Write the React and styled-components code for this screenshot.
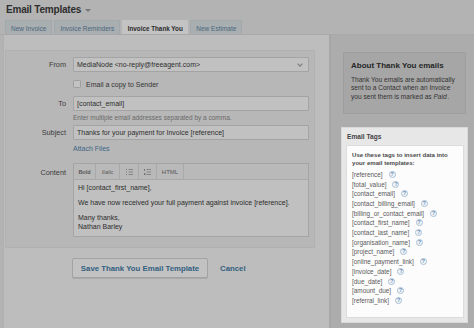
import React from "react";
import styled, { createGlobalStyle } from "styled-components";

const Global = createGlobalStyle`
  html, body {
    margin: 0;
    padding: 0;
    background: #b3b3b3;
    font-family: "Liberation Sans", Arial, sans-serif;
  }
`;

const Page = styled.div`
  width: 474px;
  height: 328px;
  overflow: hidden;
  background: #b3b3b3;
  display: flex;
  flex-direction: column;
`;

const Header = styled.div`
  padding: 4px 0 0 6px;
`;

const Title = styled.h1`
  margin: 0;
  font-size: 10px;
  line-height: 12px;
  font-weight: bold;
  letter-spacing: -0.2px;
  color: #2e2e2e;
  display: flex;
  align-items: center;
  gap: 4px;
`;

const Caret = styled.span`
  width: 0;
  height: 0;
  border-left: 3px solid transparent;
  border-right: 3px solid transparent;
  border-top: 3px solid #777;
  margin-top: 1px;
`;

const Tabs = styled.div`
  display: flex;
  gap: 2px;
  margin-top: 4px;
  margin-left: -1px;
`;

const Tab = styled.div`
  height: 15px;
  line-height: 15px;
  padding: 0 ${(p) => (p.$active ? "4.5px" : "5px")};
  font-size: ${(p) => (p.$active ? "6.3px" : "6.5px")};
  font-weight: ${(p) => (p.$active ? "bold" : "normal")};
  color: ${(p) => (p.$active ? "#2a2a2a" : "#4a677c")};
  background: ${(p) => (p.$active ? "#c3c3c3" : "#a9aeb1")};
  border: 1px solid ${(p) => (p.$active ? "#c3c3c3" : "#a3a8ab")};
  border-bottom: none;
  box-sizing: border-box;
  white-space: nowrap;
`;

const Main = styled.div`
  flex: 1;
  display: flex;
  border-top: 1px solid #a9a9a9;
  margin-top: -1px;
`;

const LeftPanel = styled.div`
  margin-left: 3px;
  width: 328px;
  background: #bdbdbd;
  border-left: 1px solid #b0b0b0;
  border-right: 2px solid #a6a6a6;
  padding: 15px 14px 0 1px;
  box-sizing: border-box;
`;

const FormBox = styled.div`
  background: #b7b7b7;
  border: 1px solid #b1b1b1;
  padding: 6px 5px 10px 0;
  display: flex;
  flex-direction: column;
`;

const Row = styled.div`
  display: flex;
  align-items: ${(p) => (p.$top ? "flex-start" : "center")};
  margin-top: ${(p) => p.$mt || 0}px;
`;

const Label = styled.div`
  width: 60px;
  padding-right: 7px;
  box-sizing: content-box;
  text-align: right;
  font-size: 7.3px;
  color: #3c3c3c;
  flex-shrink: 0;
  padding-top: ${(p) => (p.$top ? "5px" : "0")};
`;

const Input = styled.div`
  width: 240px;
  height: 15px;
  box-sizing: border-box;
  background: #c1c1c1;
  border: 1px solid #a4a4a4;
  border-radius: 1px;
  font-size: 7px;
  line-height: 13px;
  padding: 0 3px;
  color: #2f2f2f;
  display: flex;
  align-items: center;
  justify-content: space-between;
  white-space: nowrap;
`;

const Chevron = styled.span`
  width: 3px;
  height: 3px;
  border-right: 1px solid #7a7a7a;
  border-bottom: 1px solid #7a7a7a;
  transform: rotate(45deg);
  margin: -2px 3px 0 0;
`;

const Check = styled.span`
  width: 8px;
  height: 8px;
  box-sizing: border-box;
  border: 1px solid #9e9e9e;
  background: #c3c3c3;
  border-radius: 1.5px;
`;

const CheckText = styled.span`
  font-size: 7px;
  color: #343434;
  margin-left: 5px;
`;

const Help = styled.div`
  font-size: 6.5px;
  color: #6a6a6a;
  margin-top: 3px;
  line-height: 8px;
`;

const Link = styled.a`
  font-size: 7px;
  color: #3e6686;
  text-decoration: none;
  line-height: 8px;
`;

const Editor = styled.div`
  width: 240px;
  box-sizing: border-box;
  border: 1px solid #a4a4a4;
  background: #c0c0c0;
`;

const Toolbar = styled.div`
  display: flex;
  height: 15px;
  background: #b9b9b9;
  border-bottom: 1px solid #a9a9a9;
`;

const ToolBtn = styled.div`
  width: ${(p) => p.$w}px;
  box-sizing: border-box;
  border-right: 1px solid #a9a9a9;
  display: flex;
  align-items: center;
  justify-content: center;
  font-size: ${(p) => p.$size || 5.5}px;
  font-weight: ${(p) => (p.$bold ? "bold" : "normal")};
  font-style: ${(p) => (p.$italic ? "italic" : "normal")};
  color: #555;
`;

const EditorBody = styled.div`
  padding: 3px 4px 5px;
  font-size: 7px;
  line-height: 9px;
  color: #2c2c2c;
  p {
    margin: 0 0 6px;
  }
  p:last-child {
    margin: 0;
  }
`;

const Actions = styled.div`
  display: flex;
  align-items: center;
  gap: 12px;
  margin: 10px 0 0 67px;
`;

const SaveButton = styled.button`
  width: 136px;
  height: 20px;
  padding: 0;
  background: #c2c2c2;
  border: 1px solid #a3a3a3;
  border-radius: 2px;
  box-shadow: 0 1px 0 #a9a9a9;
  font-family: inherit;
  font-size: 7.8px;
  font-weight: bold;
  color: #33607f;
`;

const Cancel = styled.a`
  font-size: 7.8px;
  font-weight: bold;
  color: #33607f;
  text-decoration: none;
`;

const Sidebar = styled.div`
  flex: 1;
  background: #acacac;
  padding: 17px 6px 0 10px;
  display: flex;
  flex-direction: column;
`;

const About = styled.div`
  margin: 0 2px 0 2px;
  height: 62px;
  box-sizing: border-box;
  background: #a6a6a6;
  border: 1px solid #9e9e9e;
  padding: 8px 5px 0 7px;
  color: #303030;
`;

const AboutTitle = styled.div`
  font-size: 8px;
  font-weight: bold;
  line-height: 10px;
  color: #262626;
`;

const AboutText = styled.div`
  font-size: 6.6px;
  line-height: 8.3px;
  margin-top: 5px;
  color: #333;
`;

const Em = styled.span`
  font-style: italic;
  padding-right: 0.6px;
`;

const TagsPanel = styled.div`
  margin-top: 13px;
  background: #e7e7e7;
  border: 1px solid #d9d9d9;
  padding: 0 3px 4px 4px;
  height: 196px;
  box-sizing: border-box;
  display: flex;
  flex-direction: column;
`;

const TagsHeader = styled.div`
  font-size: 6.6px;
  font-weight: bold;
  color: #444;
  height: 17px;
  line-height: 17px;
  padding-left: 1px;
`;

const TagsBody = styled.div`
  flex: 1;
  background: #fcfcfc;
  border: 1px solid #dcdcdc;
  padding: 5px 6px 0 5px;
`;

const TagsIntro = styled.div`
  font-size: 6.1px;
  font-weight: bold;
  line-height: 8.3px;
  color: #4a4a4a;
  margin-bottom: 2px;
`;

const TagRow = styled.div`
  display: flex;
  align-items: center;
  height: 9.7px;
  font-size: 6.4px;
  color: #5a5a5a;
`;

const HelpIcon = styled.span`
  width: 7px;
  height: 7px;
  margin-left: 6px;
  box-sizing: border-box;
  border-radius: 50%;
  border: 1px solid #a9bfd4;
  background: #f1f5f9;
  color: #5d87ad;
  font-size: 5px;
  font-weight: bold;
  line-height: 5px;
  display: flex;
  align-items: center;
  justify-content: center;
`;

const tags = [
  "[reference]",
  "[total_value]",
  "[contact_email]",
  "[contact_billing_email]",
  "[billing_or_contact_email]",
  "[contact_first_name]",
  "[contact_last_name]",
  "[organisation_name]",
  "[project_name]",
  "[online_payment_link]",
  "[invoice_date]",
  "[due_date]",
  "[amount_due]",
  "[referral_link]",
];

function ListIcon({ ordered }) {
  return (
    <svg width="7" height="6" viewBox="0 0 7 6">
      {ordered ? (
        <>
          <rect x="0" y="0" width="1" height="2" fill="#777" />
          <rect x="0" y="4" width="1.5" height="2" fill="#777" />
        </>
      ) : (
        <>
          <rect x="0" y="0" width="1" height="1" fill="#777" />
          <rect x="0" y="2.5" width="1" height="1" fill="#777" />
          <rect x="0" y="5" width="1" height="1" fill="#777" />
        </>
      )}
      <rect x="2.5" y="0" width="4.5" height="0.8" fill="#777" />
      <rect x="2.5" y="2.6" width="4.5" height="0.8" fill="#777" />
      <rect x="2.5" y="5.2" width="4.5" height="0.8" fill="#777" />
    </svg>
  );
}

export default function App() {
  return (
    <Page>
      <Global />
      <Header>
        <Title>
          Email Templates <Caret />
        </Title>
        <Tabs>
          <Tab>New Invoice</Tab>
          <Tab>Invoice Reminders</Tab>
          <Tab $active>Invoice Thank You</Tab>
          <Tab>New Estimate</Tab>
        </Tabs>
      </Header>

      <Main>
        <LeftPanel>
          <FormBox>
            <Row>
              <Label>From</Label>
              <Input>
                MediaNode &lt;no-reply@freeagent.com&gt;
                <Chevron />
              </Input>
            </Row>
            <Row $mt={8}>
              <Label />
              <Check />
              <CheckText>Email a copy to Sender</CheckText>
            </Row>
            <Row $mt={8}>
              <Label>To</Label>
              <Input>[contact_email]</Input>
            </Row>
            <Row>
              <Label />
              <Help>Enter multiple email addresses separated by a comma.</Help>
            </Row>
            <Row $mt={3}>
              <Label>Subject</Label>
              <Input>Thanks for your payment for Invoice [reference]</Input>
            </Row>
            <Row $mt={5}>
              <Label />
              <Link href="#">Attach Files</Link>
            </Row>
            <Row $mt={10} $top>
              <Label $top>Content</Label>
              <Editor>
                <Toolbar>
                  <ToolBtn $w={22} $bold>Bold</ToolBtn>
                  <ToolBtn $w={24} $italic>Italic</ToolBtn>
                  <ToolBtn $w={19}>
                    <ListIcon />
                  </ToolBtn>
                  <ToolBtn $w={18}>
                    <ListIcon ordered />
                  </ToolBtn>
                  <ToolBtn $w={27} $size={6}>HTML</ToolBtn>
                </Toolbar>
                <EditorBody>
                  <p>Hi [contact_first_name],</p>
                  <p>We have now received your full payment against invoice [reference].</p>
                  <p>
                    Many thanks,
                    <br />
                    Nathan Barley
                  </p>
                </EditorBody>
              </Editor>
            </Row>
          </FormBox>
          <Actions>
            <SaveButton>Save Thank You Email Template</SaveButton>
            <Cancel href="#">Cancel</Cancel>
          </Actions>
        </LeftPanel>

        <Sidebar>
          <About>
            <AboutTitle>About Thank You emails</AboutTitle>
            <AboutText>
              Thank You emails are automatically sent to a Contact when an Invoice
              you sent them is marked as <Em>Paid</Em>.
            </AboutText>
          </About>
          <TagsPanel>
            <TagsHeader>Email Tags</TagsHeader>
            <TagsBody>
              <TagsIntro>
                Use these tags to insert data into your email templates:
              </TagsIntro>
              {tags.map((t) => (
                <TagRow key={t}>
                  {t}
                  <HelpIcon>?</HelpIcon>
                </TagRow>
              ))}
            </TagsBody>
          </TagsPanel>
        </Sidebar>
      </Main>
    </Page>
  );
}
